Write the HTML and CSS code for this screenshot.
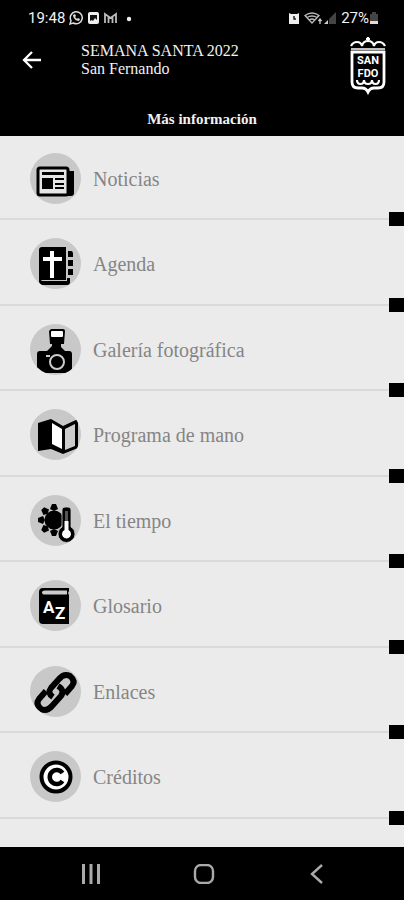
FILE: index.html
```html
<!DOCTYPE html>
<html lang="es">
<head>
<meta charset="utf-8">
<meta name="viewport" content="width=device-width, initial-scale=1">
<title>Semana Santa 2022</title>
<link rel="stylesheet" href="styles.css">
</head>
<body>
<header class="top">
  <div class="status">
    <span class="time">19:48</span>
    <svg class="status-left" width="70" height="16" viewBox="0 0 70 16" aria-hidden="true">
      <path d="M1 14l1-3.400A6 6 0 1 1 4.400 13z" fill="none" stroke="#ddd" stroke-width="1.500"/>
      <path d="M4 5c0 3 3 6 6 6l1-2-2-1-1 1-2-2 1-1-1-2z" fill="#ddd"/>
      <rect x="19" y="2" width="11" height="12" rx="2" fill="#eee"/>
      <path d="M21 5h7v5l-2-2-2 3-1-1-2 1z" fill="#111"/>
      <path d="M36 13V4l5.500 4L47 4v9M39.500 13V7M43.500 13V7" fill="none" stroke="#bbb" stroke-width="1.800"/>
      <circle cx="60" cy="9" r="2.200" fill="#eee"/>
    </svg>
    <svg class="status-right" width="50" height="16" viewBox="0 0 50 16" aria-hidden="true">
      <path d="M1 3l2 1h6l2-1v11H1z" fill="#eee"/>
      <path d="M6 6v3h2" fill="none" stroke="#222" stroke-width="1.500"/>
      <path d="M17 5.500q7-5 14 0L24 13zM19 7.500q5-3 10 0M21.500 10q2.500-2 5 0" fill="none" stroke="#bbb" stroke-width="1.300"/>
      <path d="M32 14V9M30.500 11L32 9l1.500 2" fill="none" stroke="#ccc" stroke-width="1.300"/>
      <path d="M36 14l4-4v4z" fill="#ccc"/>
      <path d="M41 14V9l7-7v12z" fill="#444"/>
    </svg>
    <span class="level">27%</span>
    <svg width="9" height="16" viewBox="0 0 9 16" aria-hidden="true">
      <path d="M0 4h2V2h4v2h2v7H0z" fill="#444"/><path d="M0 11h8v3H0z" fill="#ddd"/>
    </svg>
  </div>
  <div class="bar">
    <button class="back" type="button" aria-label="Volver">
      <svg width="20" height="20" viewBox="0 0 20 20" aria-hidden="true"><path d="M19 10H2M10 2l-8 8 8 8" fill="none" stroke="#fff" stroke-width="2.300"/></svg>
    </button>
    <div class="titles"><div>SEMANA SANTA 2022</div><div>San Fernando</div></div>
    <svg class="crest" width="36" height="58" viewBox="0 0 36 58" role="img" aria-label="Escudo de San Fernando">
      <g fill="none" stroke="#fff">
        <path d="M1 9Q3 5 7 5q4 0 5 4 1-5 6-5t6 5q1-4 5-4 4 0 6 4M18 0v5M16 2h4" stroke-width="2.200"/>
        <path d="M1 12h34" stroke-width="1.300"/>
        <path d="M2 15h32v30q0 6-6 6h-4q-4 0-6 4-2-4-6-4H8q-6 0-6-6z" stroke-width="2.800"/>
        <path d="M7 43q0 4 3.500 4t3.500-4q0 4 4 4t4-4q0 4 3.500 4t3.500-4" stroke-width="2.200"/>
      </g>
      <text class="crest-text" x="18" y="27" text-anchor="middle">SAN</text>
      <text class="crest-text" x="18" y="40" text-anchor="middle">FDO</text>
    </svg>
  </div>
  <h1>Más información</h1>
</header>
<main>
  <ul class="menu">
    <li><a href="#noticias">
      <svg class="icon" viewBox="0 0 51 51" aria-hidden="true">
        <path d="M38 18h6v22q0 3-3 3h-4z"/><rect x="8" y="15" width="30" height="27" rx="2" fill="#e5e5e5" stroke="#000" stroke-width="3"/>
        <path d="M12 19h22v3H12zM12 25h11v11H12zM25 25h9v2h-9zM25 30h9v2h-9zM25 34h9v2h-9z"/>
      </svg><span>Noticias</span></a></li>
    <li><a href="#agenda">
      <svg class="icon" viewBox="0 0 51 51" aria-hidden="true">
        <path d="M12 9h24v33H13q-2 0-2 1h26v-3h3v4q0 3-3 3H13q-4 0-4-4V12q0-3 3-3z"/>
        <path d="M38 13h3q2 0 2 3v3h-5zM38 22h5v6h-5zM38 31h5v6h-5z"/><path d="M20 13h4v6h8v4h-8v17h-4V23h-7v-4h7z" fill="#fff"/>
      </svg><span>Agenda</span></a></li>
    <li><a href="#galeria">
      <svg class="icon" viewBox="0 0 51 51" aria-hidden="true">
        <path d="M21 5h12q2 0 2 2l-1 13h-3v3l4 4h4q3 0 3 3v16q0 3-3 3H10q-3 0-3-3V30q0-3 3-3h7l5-5v-2h-2L19 7z"/>
        <rect x="21" y="7" width="12" height="6" rx="1" fill="#fff"/><circle cx="27" cy="38" r="7" fill="none" stroke="#ccc" stroke-width="2"/><path d="M16 32h4" stroke="#ccc" stroke-width="2"/>
      </svg><span>Galería fotográfica</span></a></li>
    <li><a href="#programa">
      <svg class="icon" viewBox="0 0 51 51" aria-hidden="true">
        <path d="M8 14l13-4 12 7 15-7v29l-15 6-12-5-13 2z"/><path d="M22 14l10 6v20l-10-5z" fill="#fff"/><path d="M35 20l10-5v22l-10 4z" fill="#ccc"/>
      </svg><span>Programa de mano</span></a></li>
    <li><a href="#tiempo">
      <svg class="icon" viewBox="0 0 51 51" aria-hidden="true">
        <circle cx="24" cy="25" r="9.500"/>
        <path id="ray" d="M22 9h4l2 5-4 2-4-2z"/><use href="#ray" transform="rotate(-45 24 25)"/><use href="#ray" transform="rotate(-90 24 25)"/><use href="#ray" transform="rotate(-135 24 25)"/><use href="#ray" transform="rotate(180 24 25)"/>
        <path d="M32 15q0-3 4.500-3t4.500 3v17q4 2 4 7a8.500 8.500 0 0 1-17 0q0-5 4-7z" stroke="#ccc" stroke-width=".8"/>
        <path d="M36.500 16v10" stroke="#555" stroke-width="3"/><path d="M34.500 26h4v9a4.500 4.500 0 1 1-4 0z" fill="#fff"/>
      </svg><span>El tiempo</span></a></li>
    <li><a href="#glosario">
      <svg class="icon" viewBox="0 0 51 51" aria-hidden="true">
        <path d="M13 8h26v3l-1 2 1 2v29H13q-4 0-4-4V12q0-4 4-4z"/><path d="M15 10.500h22v4H14q-2 0-2-2 0-2 3-2z" fill="#ccc"/>
        <text class="letter" x="13" y="33">A</text><text class="letter" x="25" y="39">Z</text>
      </svg><span>Glosario</span></a></li>
    <li><a href="#enlaces">
      <svg class="icon" viewBox="0 0 51 51" aria-hidden="true">
        <g fill="none" stroke="#000" stroke-width="6"><path d="M23 31q-6-4-2-9l8-9q5-6 11-3 6 5 2 10l-7 8"/><path d="M28 20q7 4 3 10l-9 10q-5 6-11 3-6-5-2-10l7-8"/></g>
      </svg><span>Enlaces</span></a></li>
    <li><a href="#creditos">
      <svg class="icon" viewBox="0 0 51 51" aria-hidden="true">
        <circle cx="26" cy="26" r="14.500" fill="#fff" stroke="#000" stroke-width="4"/><path d="M32.500 22a7 7 0 1 0 0 8" fill="none" stroke="#000" stroke-width="4.500"/>
      </svg><span>Créditos</span></a></li>
  </ul>
</main>
<nav class="system" aria-label="Sistema">
  <button type="button" aria-label="Recientes"><svg width="20" height="20" viewBox="0 0 20 20" aria-hidden="true"><path d="M2.500 0v20M10 0v20M17.500 0v20" stroke="#aaa" stroke-width="3"/></svg></button>
  <button type="button" aria-label="Inicio"><svg width="22" height="20" viewBox="0 0 22 20" aria-hidden="true"><rect x="2" y="1" width="18" height="18" rx="6" fill="none" stroke="#aaa" stroke-width="2.400"/></svg></button>
  <button type="button" aria-label="Atrás"><svg width="20" height="20" viewBox="0 0 20 20" aria-hidden="true"><path d="M15 1L5 10l10 9" fill="none" stroke="#aaa" stroke-width="2.400"/></svg></button>
</nav>
</body>
</html>
```
FILE: styles.css
```css
* { box-sizing: border-box; }
body {
  margin: 0;
  min-height: 100vh;
  display: flex;
  flex-direction: column;
  background: #ebebeb;
  font-family: "Liberation Serif", serif;
}
svg { display: block; flex: none; }
button { padding: 0; border: 0; background: none; display: flex; align-items: center; justify-content: center; }

.top { position: relative; z-index: 1; background: #000; color: #f2f2f2; }
.status {
  display: flex;
  align-items: center;
  padding: 8px 25px 0 28px;
  font: 15px/20px Roboto, sans-serif;
}
.status-left { margin-left: 4px; }
.status-right { margin-left: auto; margin-right: 3px; }
.level { margin-right: 1px; }
.bar { display: flex; padding: 9px 18px 0 22px; }
.back { width: 20px; height: 46px; }
.titles { flex: 1; padding: 5px 0 0 39px; font-size: 16px; line-height: 18px; }
.crest-text { font: bold 11px Roboto, sans-serif; fill: #fff; }
h1 { margin: 0; padding: 14px 0 7px; font-size: 15px; line-height: 20px; text-align: center; }

main { flex: 1; }
.menu { list-style: none; margin: -1px 0 0; padding: 0; }
.menu li { position: relative; height: 85px; border-bottom: 2px solid #dadada; }
.menu li:nth-child(even) { height: 86px; }
.menu li::after {
  content: "";
  position: absolute;
  right: 0;
  bottom: -8px;
  width: 15px;
  height: 14px;
  background: #000;
}
.menu a {
  display: flex;
  align-items: center;
  gap: 12px;
  padding: 18px 30px 0;
  color: #858585;
  font-size: 20px;
  line-height: 24px;
  text-decoration: none;
}
.icon { width: 51px; height: 51px; border-radius: 50%; background: #c8c8c8; overflow: hidden; }
.letter { font: bold 17px Roboto, sans-serif; fill: #fff; }

.system {
  display: grid;
  grid-template-columns: repeat(3, 1fr);
  justify-items: center;
  padding: 0 31px 0 35px;
  background: #000;
}
.system button { width: 48px; height: 53px; }
```
